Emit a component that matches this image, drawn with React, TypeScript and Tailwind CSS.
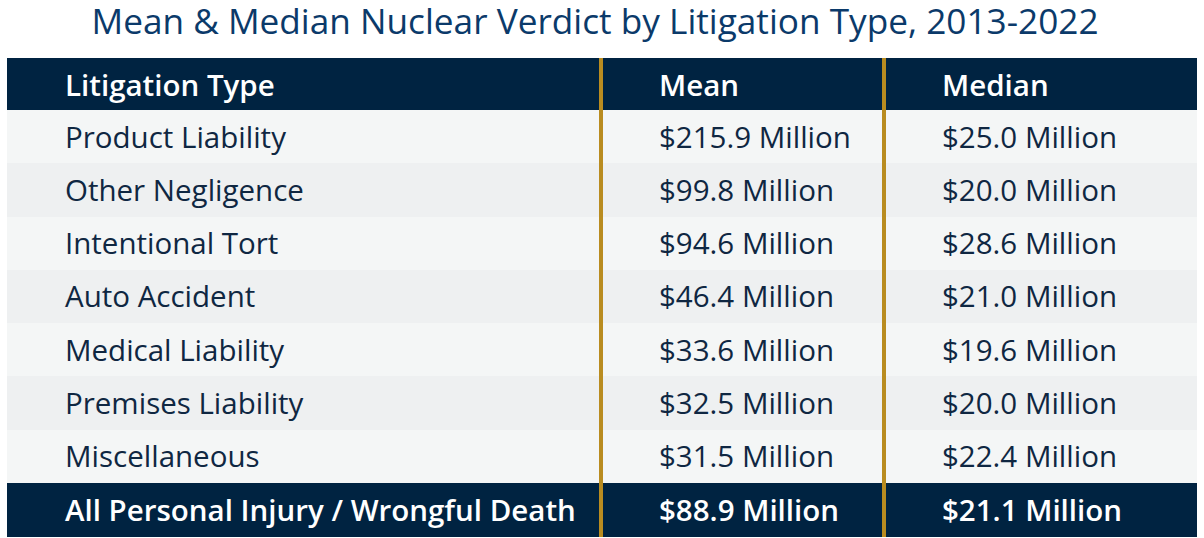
const rows = [
  ['Product Liability', '$215.9 Million', '$25.0 Million'],
  ['Other Negligence', '$99.8 Million', '$20.0 Million'],
  ['Intentional Tort', '$94.6 Million', '$28.6 Million'],
  ['Auto Accident', '$46.4 Million', '$21.0 Million'],
  ['Medical Liability', '$33.6 Million', '$19.6 Million'],
  ['Premises Liability', '$32.5 Million', '$20.0 Million'],
  ['Miscellaneous', '$31.5 Million', '$22.4 Million'],
];

const cols = 'grid grid-cols-[592px_279px_311px]';

const App = () => {
  return (
    <div className="w-[1204px] h-[538px] bg-white font-['Open_Sans',sans-serif]">
      <div className="h-[58px] flex items-center justify-center pr-[14px] pb-[18px]">
        <h1 className="text-[35.2px] leading-[40px] text-[#0b3a6a] whitespace-nowrap">
          Mean &amp; Median Nuclear Verdict by Litigation Type, 2013-2022
        </h1>
      </div>

      <div className="relative ml-[7px] w-[1190px]">
        {/* Header */}
        <div className={`${cols} h-[52px] bg-[#002341] text-white font-semibold text-[29.5px]`}>
          <div className="flex items-center pt-[2px] pl-[58px]">Litigation Type</div>
          <div className="flex items-center pt-[2px] pl-[60px]">Mean</div>
          <div className="flex items-center pt-[2px] pl-[64px]">Median</div>
        </div>

        {/* Body */}
        {rows.map(([type, mean, median], i) => (
          <div
            key={type}
            className={`${cols} h-[53.3px] text-[29.5px] text-[#0f2742] ${
              i % 2 === 0 ? 'bg-[#f4f6f6]' : 'bg-[#eef0f1]'
            }`}
          >
            <div className="flex items-center pl-[58px]">{type}</div>
            <div className="flex items-center pl-[60px]">{mean}</div>
            <div className="flex items-center pl-[64px]">{median}</div>
          </div>
        ))}

        {/* Total */}
        <div className={`${cols} h-[54px] bg-[#002341] text-white font-semibold text-[29.5px]`}>
          <div className="flex items-center pl-[58px]">All Personal Injury / Wrongful Death</div>
          <div className="flex items-center pl-[60px]">$88.9 Million</div>
          <div className="flex items-center pl-[64px]">$21.1 Million</div>
        </div>

        {/* Gold dividers */}
        <div className="absolute top-0 bottom-0 left-[592px] w-[4px] bg-[#b98c20]" />
        <div className="absolute top-0 bottom-0 left-[875px] w-[4px] bg-[#b98c20]" />
      </div>
    </div>
  );
};

export default App;
